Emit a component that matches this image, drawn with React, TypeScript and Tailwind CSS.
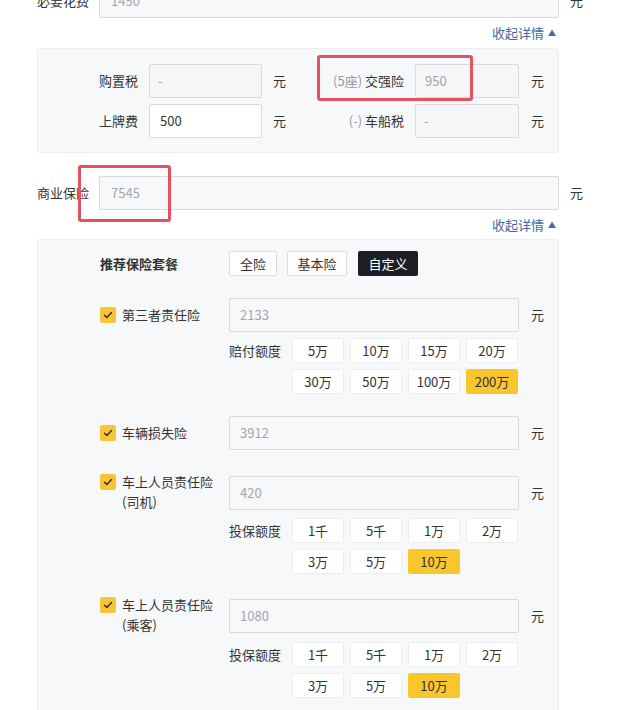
import React from "react";

const Check = () => (
  <span className="mt-[2px] flex h-[16px] w-[16px] shrink-0 items-center justify-center rounded-[2px] bg-[#f8c53a]">
    <svg width="10" height="8" viewBox="0 0 10 8" fill="none">
      <path d="M1.5 4.2 L3.9 6.4 L8.5 1.6" stroke="#3a3322" strokeWidth="1.5" strokeLinecap="round" strokeLinejoin="round" />
    </svg>
  </span>
);

const Collapse = ({ h }: { h: string }) => (
  <div className={`flex w-[522px] items-center justify-end pr-[3px] ${h}`}>
    <span className="text-[13px] text-[#4068a3]">收起详情</span>
    <span className="ml-[4px] text-[8px] text-[#4068a3]">▲</span>
  </div>
);

const OptGrid = ({ label, items, sel }: { label: string; items: string[]; sel: string }) => (
  <div className="flex items-start">
    <div className="flex h-[25px] w-[63px] items-center">{label}</div>
    <div className="grid w-[226px] grid-cols-4 gap-[6px]">
      {items.map((t) => (
        <div
          key={t}
          className={
            t === sel
              ? "flex h-[25px] items-center justify-center rounded-[2px] bg-[#f9c62e] text-[#333]"
              : "flex h-[25px] items-center justify-center rounded-[2px] border border-[#eceef1] bg-white text-[#333]"
          }
        >
          {t}
        </div>
      ))}
    </div>
  </div>
);

const Item = ({
  lines,
  value,
  mt,
  children,
  twoLine,
}: {
  lines: string[];
  value: string;
  mt: string;
  children?: React.ReactNode;
  twoLine?: boolean;
}) => (
  <div className={mt}>
    <div className="flex h-[34px] items-start">
      <div className={`flex h-[34px] w-[129px] items-start ${twoLine ? "-mt-[4px]" : "pt-[7px]"}`}>
        <Check />
        <div className="ml-[6px] leading-[20px]">
          {lines.map((l) => (
            <div key={l}>{l}</div>
          ))}
        </div>
      </div>
      <div className="flex h-[34px] w-[290px] items-center rounded-[2px] border border-[#d8dade] bg-[#f7f8fa] pl-[10px] text-[#a3a5a9]">
        {value}
      </div>
      <div className="ml-[12px] flex h-[34px] items-center">元</div>
    </div>
    {children}
  </div>
);

export default function App() {
  const big = ["5万", "10万", "15万", "20万", "30万", "50万", "100万", "200万"];
  const small = ["1千", "5千", "1万", "2万", "3万", "5万", "10万"];
  return (
    <div className="flex h-[710px] w-[640px] flex-col overflow-hidden bg-white font-['Noto_Sans_CJK_SC','Noto_Sans',sans-serif] text-[13px] text-[#333]">
      <div className="-mt-[16px] flex flex-col pl-[37px]">
        {/* 必要花费 */}
        <div className="flex items-center">
          <div className="w-[62px]">必要花费</div>
          <div className="flex h-[34px] w-[460px] items-center rounded-[2px] border border-[#d8dade] bg-[#f7f8fa] pl-[11px] text-[#a3a5a9]">
            1450
          </div>
          <div className="ml-[11px]">元</div>
        </div>
        <Collapse h="h-[30px]" />

        {/* panel 1 */}
        <div className="relative flex h-[105px] w-[522px] flex-col gap-[6px] rounded-[3px] border border-[#eceef2] bg-[#f7f8fa] pt-[15px]">
          <div className="flex items-center">
            <div className="w-[100px] text-right">购置税</div>
            <div className="ml-[11px] flex h-[34px] w-[113px] items-center rounded-[2px] border border-[#d8dade] bg-[#f5f6f8] pl-[8px] text-[#a3a5a9]">
              -
            </div>
            <div className="ml-[11px]">元</div>
            <div className="w-[118px] text-right">
              <span className="text-[#999]">(5座)</span> 交强险
            </div>
            <div className="ml-[11px] flex h-[34px] w-[104px] items-center rounded-[2px] border border-[#d8dade] bg-[#f5f6f8] pl-[9px] text-[#a3a5a9]">
              950
            </div>
            <div className="ml-[12px]">元</div>
          </div>
          <div className="flex items-center">
            <div className="w-[100px] text-right">上牌费</div>
            <div className="ml-[11px] flex h-[34px] w-[113px] items-center rounded-[2px] border border-[#d8dade] bg-white pl-[10px] text-[#333]">
              500
            </div>
            <div className="ml-[11px]">元</div>
            <div className="w-[118px] text-right">
              <span className="text-[#999]">(-)</span> 车船税
            </div>
            <div className="ml-[11px] flex h-[34px] w-[104px] items-center rounded-[2px] border border-[#d8dade] bg-[#f5f6f8] pl-[8px] text-[#a3a5a9]">
              -
            </div>
            <div className="ml-[12px]">元</div>
          </div>
          <div className="absolute left-[279px] top-[6px] h-[46px] w-[156px] rounded-[3px] border-[3px] border-[#e4525f]" />
        </div>

        {/* 商业保险 */}
        <div className="relative mt-[23px] flex items-center">
          <div className="w-[62px]">商业保险</div>
          <div className="flex h-[34px] w-[460px] items-center rounded-[2px] border border-[#d8dade] bg-[#f7f8fa] pl-[11px] text-[#a3a5a9]">
            7545
          </div>
          <div className="ml-[11px]">元</div>
          <div className="absolute left-[41px] top-[-11px] h-[57px] w-[93px] rounded-[3px] border-[3px] border-[#e4525f]" />
        </div>
        <Collapse h="h-[29px]" />

        {/* panel 2 */}
        <div className="flex w-[522px] flex-col rounded-[3px] border border-[#eceef2] bg-[#f7f8fa] pb-[40px] pl-[62px] pt-[11px]">
          <div className="flex items-center">
            <div className="w-[129px] font-bold">推荐保险套餐</div>
            <div className="flex h-[25px] w-[48px] items-center justify-center rounded-[2px] border border-[#dcdde0] bg-white">全险</div>
            <div className="ml-[10px] flex h-[25px] w-[60px] items-center justify-center rounded-[2px] border border-[#dcdde0] bg-white">基本险</div>
            <div className="ml-[11px] flex h-[25px] w-[60px] items-center justify-center rounded-[2px] bg-[#1d1e23] text-white">自定义</div>
          </div>

          <Item lines={["第三者责任险"]} value="2133" mt="mt-[22px]">
            <div className="ml-[129px] mt-[6px]">
              <OptGrid label="赔付额度" items={big} sel="200万" />
            </div>
          </Item>

          <Item lines={["车辆损失险"]} value="3912" mt="mt-[22px]" />

          <Item lines={["车上人员责任险", "(司机)"]} value="420" mt="mt-[26px]" twoLine>
            <div className="ml-[129px] mt-[8px]">
              <OptGrid label="投保额度" items={small} sel="10万" />
            </div>
          </Item>

          <Item lines={["车上人员责任险", "(乘客)"]} value="1080" mt="mt-[25px]" twoLine>
            <div className="ml-[129px] mt-[9px]">
              <OptGrid label="投保额度" items={small} sel="10万" />
            </div>
          </Item>
        </div>
      </div>
    </div>
  );
}
